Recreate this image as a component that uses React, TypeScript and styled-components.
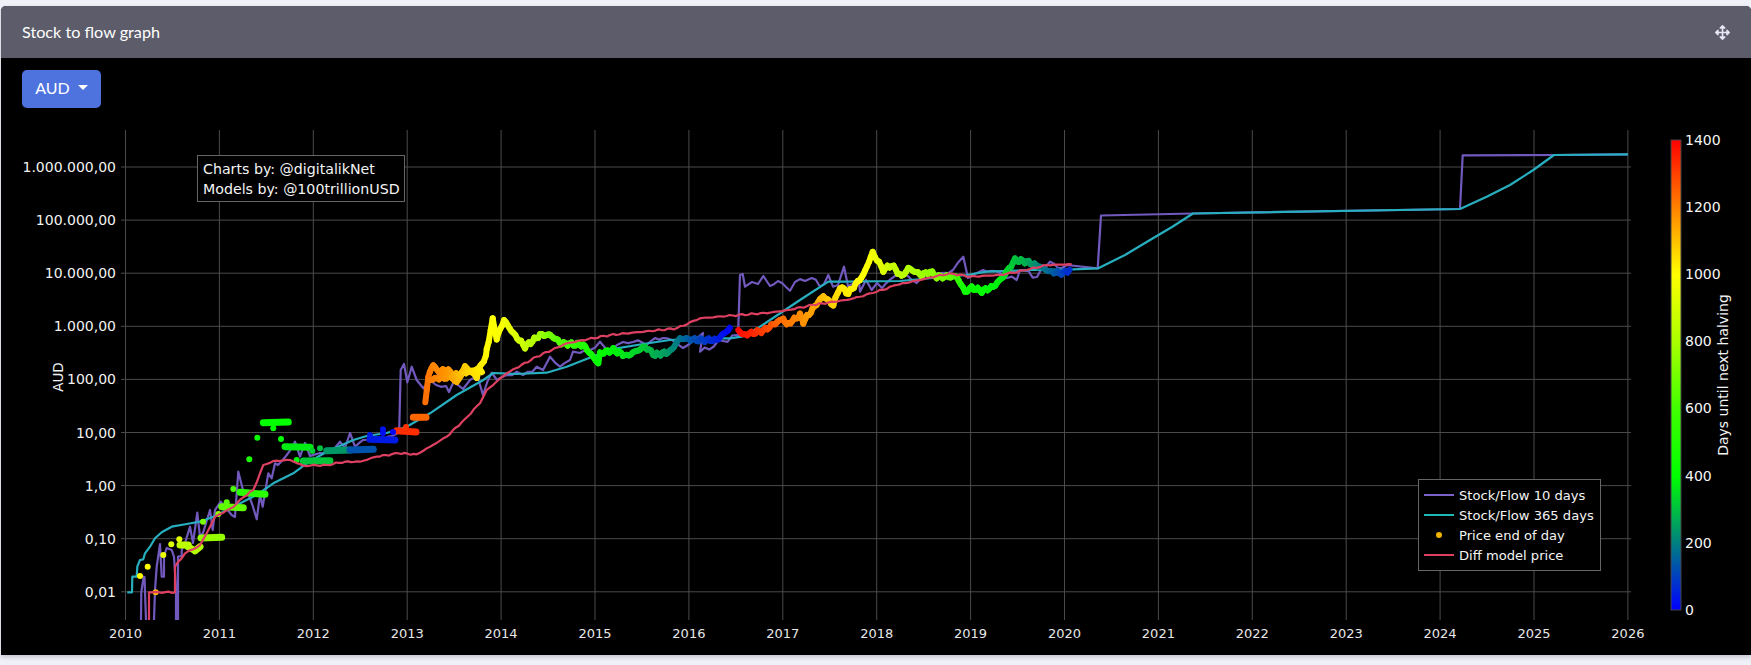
import { createGlobalStyle, styled } from "styled-components";
import { FaArrowsAlt } from "react-icons/fa";

type Pt = [number, number];

// all chart coordinates are page pixels, the svg viewBox starts at the chart's page offset
const X0 = 125.5;
const X_STEP = 93.9;
const Y_TICKS = ["1.000.000,00", "100.000,00", "10.000,00", "1.000,00", "100,00", "10,00", "1,00", "0,10", "0,01"];
const YEARS = Array.from({ length: 17 }, (_, i) => 2010 + i);
const BAR_TICKS = [1400, 1200, 1000, 800, 600, 400, 200, 0];

const COLOR_STOPS: [number, number[]][] = [
  [0, [0, 0, 255]],
  [200, [0, 128, 128]],
  [400, [0, 255, 0]],
  [600, [64, 255, 0]],
  [800, [170, 255, 0]],
  [1000, [255, 255, 0]],
  [1200, [255, 128, 0]],
  [1400, [255, 0, 0]],
];

const colorOf = (t: number) => {
  for (let i = 1; i < COLOR_STOPS.length; i++) {
    const [t1, c1] = COLOR_STOPS[i];
    const [t0, c0] = COLOR_STOPS[i - 1];
    if (t <= t1) {
      const f = (t - t0) / (t1 - t0);
      return `rgb(${c0.map((v, k) => Math.round(v + (c1[k] - v) * f)).join(",")})`;
    }
  }
  return "rgb(255,0,0)";
};

const STOCK_FLOW_10: Pt[][] = [
  [[141, 620], [141.3, 592], [143.7, 576.7], [144.5, 577], [145, 592], [146, 620]],
  [[154, 620], [155, 590], [156.7, 566.7], [160, 544], [161.7, 576.7], [164, 576.7], [164, 556], [166.7, 548], [171.7, 550], [174, 556.7], [176, 586.7], [176, 620]],
  [[178, 620], [178, 556.7], [181.7, 556], [181.7, 550], [185, 543], [190, 526.7], [193, 543], [197.3, 512.7], [200, 536.7], [203, 533], [210, 510], [212.7, 530], [215, 510], [220.7, 501.7], [225, 506.7], [231.7, 515], [235, 517], [238.3, 471.7], [243, 490], [248, 493], [253, 506.7], [256.7, 519.3], [260, 495], [262.7, 506.7], [268.3, 473.3], [271.7, 478.3], [275, 463.3], [278, 465], [286, 456], [295, 441.7], [300, 456.7], [305, 443], [310, 456], [320, 453], [333, 450], [340, 441.7], [345, 448], [350, 433], [355, 446.7], [363, 440], [376, 437], [384, 442], [392, 436], [398, 433],
    [399.3, 426.7], [400.7, 370], [404, 364], [407.3, 382.3], [411.7, 366.7], [416.7, 380], [423.3, 388.3], [430, 380], [436, 385], [446, 386], [449, 392], [454, 381], [463, 389], [470, 380], [478, 378], [483, 395], [491.7, 372.7], [497, 380], [507, 375], [516.7, 371.7], [523, 375], [536.7, 366.7], [543, 370], [550, 356.7], [560, 366.7], [570, 360], [573, 351.7], [580, 353], [590, 350], [600, 341.7], [607, 350], [617, 345], [623, 342], [633, 342], [643, 343], [663, 338], [672, 340], [683, 348], [692, 342], [703, 333], [700, 351.7], [723, 341], [736.7, 335], [738, 337],
    [740, 275], [742.7, 274], [745, 286.7], [752, 282], [758, 284], [763.3, 276], [770, 286], [778, 281], [790, 290.7], [795, 282], [805, 281], [811.7, 278], [820, 286.7], [828.3, 275], [833, 286.7], [838, 285], [844, 266.7], [848, 286], [859, 281.7], [860, 291.7], [866, 280], [871.7, 290], [877, 283], [882, 288], [895, 276], [906.7, 275], [916.7, 283], [930, 274], [940, 273], [953, 270], [963.3, 256.7], [968, 278], [983, 270], [1000, 273], [1007, 278], [1016.7, 280], [1020, 270], [1037, 277], [1050, 261.7], [1058, 268], [1066.7, 265],
    [1097.7, 268.3], [1101, 215.5], [1193, 213.5], [1460, 209], [1462.7, 155.3], [1554, 155], [1628, 154.3]],
];

const STOCK_FLOW_365: Pt[] = [
  [127.3, 592.3], [132, 592.3], [132.3, 576.7], [136.7, 576.7], [137.3, 566.7], [140, 560], [143.3, 559.3], [145, 553.3], [150, 546.7], [155, 538.3], [161.7, 532.3], [171.7, 526.7], [186.7, 524], [200, 521.7], [213.3, 516.7], [233.3, 506.7], [256.7, 495], [273.3, 483.3], [293.3, 473.3], [306.7, 463.3], [326.7, 451.7], [353.3, 440], [366.7, 436], [386.7, 433], [406.7, 426.7], [430, 413.3], [456.7, 395], [483.3, 380], [493.3, 373], [516.7, 374], [546.7, 372.7], [566.7, 366.7], [596.7, 355], [616.7, 348.3], [643.3, 344], [670, 340], [703.3, 338.3], [730, 338.3], [741.7, 336.7], [760, 326.7], [800, 300], [828.3, 281.7], [843, 281.7], [900, 281], [933, 278], [966.7, 275], [986.7, 271.7], [1033, 270], [1073, 269.3], [1098.3, 268.3], [1125, 255], [1150, 240], [1172, 227], [1193, 213.5], [1460, 209], [1486.7, 196.7], [1510, 185], [1533.3, 170], [1554, 155], [1628, 154.3],
];

const DIFF_MODEL: Pt[] = [
  [149, 620], [149, 592.3], [175, 592.3], [175, 566.7], [178.3, 561.7], [185, 553.3], [193.3, 549.3], [200, 545], [206.7, 533.3], [215, 516.7], [233, 507.3], [243.3, 497.3], [253.3, 490], [263.3, 465], [273.3, 461], [290, 460], [303.3, 465.7], [326.7, 465], [345, 461.7], [360, 461.7], [376.7, 456.7], [398.3, 453.3], [416.7, 454.3], [430, 446.7], [446.7, 436.7], [465, 419], [480, 403.3], [486.7, 390], [506.7, 373.3], [536.7, 356.7], [566.7, 343.3], [610, 335], [676.7, 328.3], [700, 318.3], [726.7, 316], [770, 312.7], [788, 310], [813, 305], [850, 299.3], [873, 293], [896.7, 285], [926.7, 278.3], [950, 273.3], [970, 276.7], [1000, 275], [1026.7, 270], [1046.7, 265], [1071.7, 264.3],
];

// x, y, days until halving
const PRICE_PATH: [number, number, number][] = [
  [425.3, 402.3, 1230], [428.3, 376.7, 1220], [433.3, 364, 1200], [437.3, 371.7, 1190], [448.3, 370, 1170], [456.7, 383.3, 1130], [465, 366.7, 1090], [476.7, 376.7, 1050], [481.7, 363.3, 1030], [486, 356.7, 1020], [486.7, 350, 1010], [492.7, 320, 1000], [496.7, 338.3, 995], [504, 320, 980], [513.3, 333.3, 940], [525, 346.7, 880], [540, 335, 800], [550, 335, 720], [561.7, 343.3, 640], [583.3, 345, 520], [598.3, 363.3, 430], [600, 353.3, 420], [613.3, 350, 390], [626.7, 356, 360], [645, 346.7, 320], [655, 355, 280], [670, 351.7, 240], [680, 338.3, 190], [696.7, 340, 120], [716.7, 340, 60], [731.7, 326.7, 10],
];

// second pass over the lumpy orange stretch of 2013
const PRICE_PATH_FILL: [number, number, number][] = [
  [429, 380, 1215], [439, 378, 1190], [450, 377, 1160], [458, 374, 1120], [468, 372, 1075], [478, 369, 1040], [484, 372, 1025],
];

const PRICE_PATH_2: [number, number, number][] = [
  [738.3, 330, 1400], [743.3, 335, 1380], [763.3, 330.7, 1310], [783.3, 318.3, 1230], [786.7, 325, 1220], [800, 315, 1190], [803.3, 321.7, 1180], [818.3, 301.7, 1130], [823.3, 296, 1110], [833.3, 305, 1080], [840, 286.7, 1050], [848.3, 293.3, 1030], [863.3, 275, 1000], [872.7, 252.7, 980], [883.3, 270, 930], [891.7, 265, 880], [901.7, 276.7, 850], [908.3, 268.3, 830], [921.7, 275, 790], [930, 271.7, 760], [936.7, 276.7, 740], [956.7, 276.7, 640], [965, 291.7, 470], [971.7, 287.7, 430], [981.7, 291, 410], [993.3, 286.7, 390], [1003.3, 276.7, 370], [1015, 260, 310], [1026.7, 261.7, 280], [1040, 266.7, 210], [1050, 271.7, 170], [1063.3, 273.3, 110], [1071.7, 268.3, 60],
];

const PRICE_RUNS: [number, number, number, number, number][] = [
  [180, 545, 188.3, 545, 850], [188.3, 547, 192, 549, 830], [195, 550.7, 200, 546.7, 820], [201, 538, 221.7, 537.3, 760],
  [221.7, 506.7, 243.3, 507.7, 660], [240, 492.3, 265, 494.3, 530], [263.3, 422.7, 288.3, 422, 410],
  [285, 446.7, 310, 447.3, 370], [303.3, 461, 330, 460.7, 310], [326.7, 450.7, 350, 450, 240], [350, 450, 373.3, 449.3, 130],
  [370, 439.3, 395, 440, 40], [396.7, 430.7, 416, 432, 1330], [413.3, 417.3, 426, 417.3, 1240],
];

const PRICE_DOTS: [number, number, number][] = [
  [140, 576, 1000], [155.7, 592.3, 1100], [147.7, 566.7, 1000], [163.3, 555, 960], [171.3, 544.3, 920], [179.3, 539.3, 930], [195, 551, 830],
  [203, 521.7, 710], [218.3, 514, 760], [226.7, 502.3, 650], [233.3, 489, 620], [249.3, 459.3, 480], [257.3, 437.7, 430], [281, 439, 400], [273.3, 428.3, 400],
  [296.7, 460, 390], [312.3, 451, 320], [320, 448.3, 300], [383, 429.3, 30], [393, 432, 10], [406, 427, 1320], [383, 433, 20], [370, 435, 40],
];

// small stable wiggle so ruled segments look like daily data
const wiggle = (i: number) => Math.sin(i * 1.7) * 0.9 + Math.sin(i * 4.3) * 0.6;

const densify = (path: [number, number, number][]) => {
  const out: [number, number, number][] = [];
  path.slice(1).forEach((p, i) => {
    const q = path[i];
    const n = Math.max(1, Math.round(Math.abs(p[0] - q[0]) / 2));
    for (let k = 0; k < n; k++) {
      const f = k / n;
      const j = out.length;
      out.push([q[0] + (p[0] - q[0]) * f, q[1] + (p[1] - q[1]) * f + wiggle(j) * 1.3, q[2] + (p[2] - q[2]) * f]);
    }
  });
  return out;
};

const roughen = (pts: Pt[], amp: number, step: number, maxX = Infinity) => {
  const out: Pt[] = [pts[0]];
  pts.slice(1).forEach((p, i) => {
    const q = pts[i];
    const n = p[0] < maxX ? Math.floor(Math.abs(p[0] - q[0]) / step) : 0;
    for (let k = 1; k < n; k++) {
      const f = k / n;
      out.push([q[0] + (p[0] - q[0]) * f, q[1] + (p[1] - q[1]) * f + wiggle(out.length) * amp]);
    }
    out.push(p);
  });
  return out;
};

const GlobalStyle = createGlobalStyle`
  html, body {
    margin: 0;
    height: 665px;
    overflow: hidden;
    background: #f0f0f8;
  }
`;

const Page = styled.div`
  padding: 6px 0 0 1px;
`;

const Card = styled.section`
  height: 649px;
  background: #000;
  border-radius: 5px 5px 0 0;
  overflow: hidden;
  box-shadow: 0 2px 4px rgba(60, 60, 80, 0.25);
`;

const CardHeader = styled.header`
  height: 52px;
  background: #5c5c6b;
  color: #fff;
  display: flex;
  align-items: center;
  justify-content: space-between;
  padding: 0 21px 2px;
  box-sizing: border-box;
  font: 400 16.2px "Lato", "Open Sans", sans-serif;
`;

const MoveIcon = styled(FaArrowsAlt)`
  color: #e6e6f6;
  font-size: 15px;
  margin-top: 2px;
`;

const Toolbar = styled.div`
  height: 60px;
  padding: 12px 0 0 21px;
  box-sizing: border-box;
`;

const Dropdown = styled.button`
  width: 79px;
  height: 38px;
  display: inline-flex;
  align-items: center;
  justify-content: center;
  gap: 8px;
  background: #4e73df;
  color: #fff;
  border: 0;
  border-radius: 5px;
  padding: 0 0 3px;
  font: 400 16px "Lato", "Open Sans", sans-serif;
`;

const Caret = styled.span`
  border-top: 5px solid #fff;
  border-left: 5px solid transparent;
  border-right: 5px solid transparent;
`;

const ChartArea = styled.div`
  position: relative;
  height: 537px;
`;

const ChartSvg = styled.svg`
  display: block;
  font-family: "DejaVu Sans", Verdana, sans-serif;
`;

const Annotation = styled.div`
  position: absolute;
  left: 196px;
  top: 37px;
  width: 208px;
  height: 47px;
  box-sizing: border-box;
  background: #000;
  border: 1px solid #666;
  color: #f4f4f4;
  padding: 3px 5px;
  font: 14.2px/20px "DejaVu Sans", Verdana, sans-serif;
  white-space: nowrap;
`;

const Legend = styled.ul`
  position: absolute;
  left: 1417px;
  top: 361px;
  width: 183px;
  height: 92px;
  box-sizing: border-box;
  margin: 0;
  padding: 5px 0 0 5px;
  list-style: none;
  background: #000;
  border: 1px solid #666;
`;

const LegendRow = styled.li`
  display: flex;
  align-items: center;
  height: 20px;
  gap: 5px;
  color: #f4f4f4;
  font: 13.1px "DejaVu Sans", Verdana, sans-serif;
  white-space: nowrap;
`;

const LegendKey = styled.span<{ $color: string; $dot?: boolean }>`
  width: 30px;
  display: flex;
  justify-content: center;
  &::before {
    content: "";
    display: block;
    background: ${(p) => p.$color};
    width: ${(p) => (p.$dot ? "6px" : "30px")};
    height: ${(p) => (p.$dot ? "6px" : "2px")};
    border-radius: ${(p) => (p.$dot ? "50%" : "0")};
  }
`;

const toPoints = (pts: Pt[]) => pts.map((p) => p.join(",")).join(" ");

const LEGEND = [
  { label: "Stock/Flow 10 days", color: "#7b63c9" },
  { label: "Stock/Flow 365 days", color: "#1fb6b6" },
  { label: "Price end of day", color: "#f0b400", dot: true },
  { label: "Diff model price", color: "#e0405e" },
];

function PriceBand({ path }: { path: [number, number, number][] }) {
  const dense = densify(path);
  return (
    <g strokeWidth={6} strokeLinecap="round">
      {dense.slice(1).map((p, i) => (
        <line key={i} x1={dense[i][0]} y1={dense[i][1]} x2={p[0]} y2={p[1]} stroke={colorOf(p[2])} />
      ))}
    </g>
  );
}

function Chart() {
  return (
    <ChartSvg width={1750} height={537} viewBox="1 118 1750 537">
      <defs>
        <linearGradient id="days" x1="0" y1="1" x2="0" y2="0">
          {COLOR_STOPS.map(([t, c]) => (
            <stop key={t} offset={t / 1400} stopColor={`rgb(${c.join(",")})`} />
          ))}
        </linearGradient>
      </defs>

      <g stroke="#4a4a4a" strokeWidth={1}>
        {YEARS.map((_, i) => (
          <line key={i} x1={X0 + i * X_STEP} x2={X0 + i * X_STEP} y1={130} y2={620} />
        ))}
        {Y_TICKS.map((_, i) => (
          <line key={i} x1={121} x2={1631} y1={167 + i * 53.1} y2={167 + i * 53.1} />
        ))}
      </g>

      <g fill="none" strokeWidth={2.2} strokeLinejoin="round">
        {STOCK_FLOW_10.map((pts, i) => (
          <polyline key={i} points={toPoints(roughen(pts, 2, 4, 1090))} stroke="#7159bd" />
        ))}
        <polyline points={toPoints(STOCK_FLOW_365)} stroke="#27aebf" />
      </g>

      {PRICE_RUNS.map(([x1, y1, x2, y2, t], i) => (
        <line key={i} x1={x1} y1={y1} x2={x2} y2={y2} stroke={colorOf(t)} strokeWidth={7} strokeLinecap="round" />
      ))}
      {PRICE_DOTS.map(([x, y, t], i) => (
        <circle key={i} cx={x} cy={y} r={3} fill={colorOf(t)} />
      ))}
      <PriceBand path={PRICE_PATH} />
      <PriceBand path={PRICE_PATH_FILL} />
      <PriceBand path={PRICE_PATH_2} />

      <polyline
        points={toPoints(roughen(DIFF_MODEL, 0.6, 3))}
        fill="none"
        stroke="#dd4060"
        strokeWidth={2.2}
        strokeLinejoin="round"
      />

      <g fill="#f2f2f2" fontSize={14} textAnchor="end">
        {Y_TICKS.map((label, i) => (
          <text key={label} x={116} y={172 + i * 53.1}>
            {label}
          </text>
        ))}
      </g>
      <g fill="#e8e8e8" fontSize={13} textAnchor="middle">
        {YEARS.map((year, i) => (
          <text key={year} x={X0 + i * X_STEP} y={638}>
            {year}
          </text>
        ))}
      </g>
      <text x={63} y={377} fill="#f2f2f2" fontSize={13.5} textAnchor="middle" transform="rotate(-90 63 377)">
        AUD
      </text>

      <rect x={1671} y={140} width={10} height={470} fill="url(#days)" stroke="#444" />
      <g fill="#f6f6f6" fontSize={14}>
        {BAR_TICKS.map((t, i) => (
          <text key={t} x={1685} y={145 + i * 67.1}>
            {t}
          </text>
        ))}
      </g>
      <text x={1728} y={375} fill="#f2f2f2" fontSize={14} textAnchor="middle" transform="rotate(-90 1728 375)">
        Days until next halving
      </text>
    </ChartSvg>
  );
}

export default function App() {
  return (
    <Page>
      <GlobalStyle />
      <Card>
        <CardHeader>
          <span>Stock to flow graph</span>
          <MoveIcon />
        </CardHeader>
        <Toolbar>
          <Dropdown>
            AUD
            <Caret />
          </Dropdown>
        </Toolbar>
        <ChartArea>
          <Chart />
          <Annotation>
            Charts by: @digitalikNet
            <br />
            Models by: @100trillionUSD
          </Annotation>
          <Legend>
            {LEGEND.map((item) => (
              <LegendRow key={item.label}>
                <LegendKey $color={item.color} $dot={item.dot} />
                {item.label}
              </LegendRow>
            ))}
          </Legend>
        </ChartArea>
      </Card>
    </Page>
  );
}
